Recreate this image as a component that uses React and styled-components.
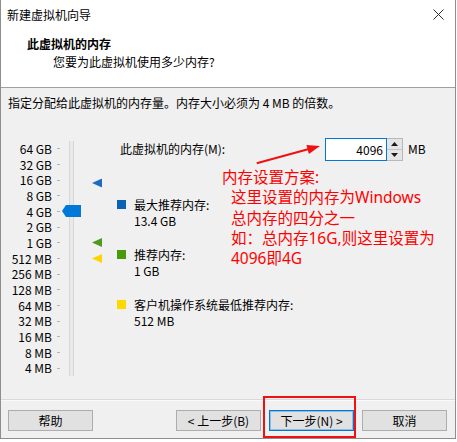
import React from 'react';
import styled, { createGlobalStyle } from 'styled-components';

const Global = createGlobalStyle`
  html, body { margin: 0; padding: 0; background: #fff; }
  body {
    font-family: "Noto Sans CJK SC", "Noto Sans", sans-serif;
    font-size: 12px;
    color: #000;
  }
`;

const ROW = 15.68;

const Window = styled.div`
  width: 456px;
  height: 439px;
  box-sizing: border-box;
  border: 1px solid #8e8e8e;
  border-top: none;
  background: #f0f0f0;
  display: flex;
  flex-direction: column;
`;

const TitleBar = styled.div`
  height: 30px;
  background: #fff;
  display: flex;
  align-items: center;
  justify-content: space-between;
  padding: 0 11px 1px 6px;
  box-sizing: border-box;
  line-height: 16px;
`;

const Header = styled.div`
  height: 58px;
  box-sizing: border-box;
  background: #fff;
  border-bottom: 1px solid #a0a0a0;
  padding: 6px 0 0 26px;
  line-height: 16px;
`;

const HeaderTitle = styled.div`
  font-weight: bold;
`;

const HeaderSub = styled.div`
  margin-top: 2px;
  padding-left: 26px;
`;

const Body = styled.div`
  position: relative;
  flex: 1;
  padding: 7px 0 0 7px;
  line-height: 16px;
`;

const Main = styled.div`
  display: flex;
  margin-top: 26px;
`;

const Scale = styled.div`
  width: 109px;
  padding-top: 3.85px;
  display: flex;
  flex-direction: column;
`;

const ScaleRow = styled.div`
  height: ${ROW}px;
  display: flex;
  align-items: center;
`;

const ScaleLabel = styled.div`
  width: 44px;
  text-align: right;
  white-space: nowrap;
  line-height: ${ROW}px;
`;

const Tick = styled.div`
  margin-left: 5px;
  width: 3px;
  height: 1px;
  background: #b4b4b4;
`;

const TrackCell = styled.div`
  position: relative;
  margin-left: 9px;
  width: 5px;
  align-self: stretch;
  box-sizing: border-box;
  background: #e9e9e9;
  border-left: 1px solid #d8d8d8;
  border-right: 1px solid #d8d8d8;
`;

const Thumb = styled.svg`
  position: absolute;
  left: -8px;
  top: 50%;
  margin-top: -6px;
  display: block;
`;

const MarkerCell = styled.div`
  margin-left: 18px;
  width: 10px;
  height: 9px;
  display: flex;
  align-items: center;
`;

const Side = styled.div`
  display: flex;
  flex-direction: column;
`;

const MemRow = styled.div`
  height: 24px;
  display: flex;
  align-items: center;
`;

const MemLabel = styled.div`
  width: 205px;
  padding-left: 3px;
`;

const Spin = styled.div`
  display: flex;
  height: 23px;
`;

const SpinInput = styled.div`
  width: 62px;
  box-sizing: border-box;
  border: 1px solid #0078d7;
  background: #fff;
  text-align: right;
  padding-right: 3px;
  line-height: 21px;
`;

const SpinButtons = styled.div`
  width: 16px;
  box-sizing: border-box;
  border: 1px solid #b8b8b8;
  border-left: none;
  background: #e5e5e5;
  display: flex;
  flex-direction: column;
`;

const SpinHalf = styled.div`
  flex: 1;
  display: flex;
  align-items: center;
  justify-content: center;
  ${(p) => (p.$top ? 'border-bottom: 1px solid #c4c4c4;' : '')}
`;

const Unit = styled.div`
  margin-left: 5px;
`;

const Legends = styled.div`
  margin-top: 36px;
  display: flex;
  flex-direction: column;
  gap: 19px;
`;

const Legend = styled.div`
  display: flex;
  align-items: flex-start;
  line-height: 15.5px;
`;

const Swatch = styled.div`
  width: 9px;
  height: 9px;
  margin: 3px 8px 0 0;
  background: ${(p) => p.$color};
`;

const Note = styled.div`
  position: absolute;
  left: 221px;
  top: 79px;
  color: #ff0000;
  font-family: "Noto Sans", "Noto Sans CJK SC", sans-serif;
  font-size: 15.5px;
  line-height: 20.3px;
  white-space: nowrap;
`;

const NoteLine = styled.div`
  padding-left: ${(p) => (p.$indent ? 9 : 0)}px;
`;

const Arrow = styled.svg`
  position: absolute;
  left: 250px;
  top: 50px;
  display: block;
`;

const Footer = styled.div`
  height: 39px;
  box-sizing: border-box;
  border-top: 1px solid #d9d9d9;
  box-shadow: inset 0 1px 0 #fafafa;
  padding: 10px 8px 0 7px;
  display: flex;
  align-items: flex-start;
`;

const Button = styled.div`
  width: 85px;
  height: 21px;
  box-sizing: border-box;
  background: #e1e1e1;
  border: 1px solid ${(p) => (p.$primary ? '#0078d7' : '#adadad')};
  ${(p) => (p.$primary ? 'box-shadow: inset 0 0 0 1px rgba(0,120,215,0.35);' : '')}
  display: flex;
  align-items: center;
  justify-content: center;
  line-height: 19px;
  white-space: nowrap;
  margin-left: ${(p) => p.$gap || 0}px;
`;

const Highlight = styled.div`
  position: relative;
  margin-left: 8px;
  &::after {
    content: '';
    position: absolute;
    left: -6px;
    right: -2px;
    top: -14px;
    bottom: -7px;
    border: 2px solid #f01010;
    pointer-events: none;
  }
`;

const Spacer = styled.div`
  flex: 1;
`;

const scaleLabels = [
  '64 GB', '32 GB', '16 GB', '8 GB', '4 GB', '2 GB', '1 GB', '512 MB',
  '256 MB', '128 MB', '64 MB', '32 MB', '16 MB', '8 MB', '4 MB',
];

const markers = {
  2: { color: '#1a6cc0', shift: 2.5 },
  6: { color: '#4e9a1c', shift: 0 },
  7: { color: '#ffd400', shift: 0 },
};

function Tri({ color, shift }) {
  return (
    <svg width="10" height="9" viewBox="0 0 10 9" style={{ transform: `translateY(${shift}px)` }}>
      <polygon points="0,4.5 10,0 10,9" fill={color} />
    </svg>
  );
}

export default function App() {
  return (
    <>
      <Global />
      <Window>
        <TitleBar>
          <span>新建虚拟机向导</span>
          <svg width="11" height="11" viewBox="0 0 11 11">
            <path d="M0.5 0.5 L10.5 10.5 M10.5 0.5 L0.5 10.5" stroke="#2b2b2b" strokeWidth="1" fill="none" />
          </svg>
        </TitleBar>
        <Header>
          <HeaderTitle>此虚拟机的内存</HeaderTitle>
          <HeaderSub>您要为此虚拟机使用多少内存?</HeaderSub>
        </Header>
        <Body>
          <div>指定分配给此虚拟机的内存量。内存大小必须为 4 MB 的倍数。</div>
          <Main>
            <Scale>
              {scaleLabels.map((label, i) => (
                <ScaleRow key={label}>
                  <ScaleLabel>{label}</ScaleLabel>
                  <Tick />
                  <TrackCell>
                    {i === 4 && (
                      <Thumb width="19" height="12" viewBox="0 0 19 12">
                        <polygon points="0,6 4,0 19,0 19,12 4,12" fill="#0078d7" />
                      </Thumb>
                    )}
                  </TrackCell>
                  <MarkerCell>
                    {markers[i] && <Tri color={markers[i].color} shift={markers[i].shift} />}
                  </MarkerCell>
                </ScaleRow>
              ))}
            </Scale>
            <Side>
              <MemRow>
                <MemLabel>此虚拟机的内存(M):</MemLabel>
                <Spin>
                  <SpinInput>4096</SpinInput>
                  <SpinButtons>
                    <SpinHalf $top>
                      <svg width="7" height="4" viewBox="0 0 7 4">
                        <polygon points="3.5,0 7,4 0,4" fill="#1a1a1a" />
                      </svg>
                    </SpinHalf>
                    <SpinHalf>
                      <svg width="7" height="4" viewBox="0 0 7 4">
                        <polygon points="0,0 7,0 3.5,4" fill="#1a1a1a" />
                      </svg>
                    </SpinHalf>
                  </SpinButtons>
                </Spin>
                <Unit>MB</Unit>
              </MemRow>
              <Legends>
                <Legend>
                  <Swatch $color="#0a62b6" />
                  <div>
                    <div>最大推荐内存:</div>
                    <div>13.4 GB</div>
                  </div>
                </Legend>
                <Legend>
                  <Swatch $color="#4a9a0e" />
                  <div>
                    <div>推荐内存:</div>
                    <div>1 GB</div>
                  </div>
                </Legend>
                <Legend>
                  <Swatch $color="#ffd800" />
                  <div>
                    <div>客户机操作系统最低推荐内存:</div>
                    <div>512 MB</div>
                  </div>
                </Legend>
              </Legends>
            </Side>
          </Main>
          <Arrow width="75" height="32" viewBox="0 0 75 32">
            <line x1="5.7" y1="25.3" x2="57" y2="11.3" stroke="#f01010" strokeWidth="2" />
            <polygon points="69,8 57.9,16 55.4,6.9" fill="#f01010" />
          </Arrow>
          <Note>
            <NoteLine>内存设置方案:</NoteLine>
            <NoteLine $indent>这里设置的内存为Windows</NoteLine>
            <NoteLine $indent>总内存的四分之一</NoteLine>
            <NoteLine $indent>如：总内存16G,则这里设置为</NoteLine>
            <NoteLine $indent>4096即4G</NoteLine>
          </Note>
        </Body>
        <Footer>
          <Button>帮助</Button>
          <Spacer />
          <Button>&lt; 上一步(B)</Button>
          <Highlight>
            <Button $primary>下一步(N) &gt;</Button>
          </Highlight>
          <Button $gap={8}>取消</Button>
        </Footer>
      </Window>
    </>
  );
}
